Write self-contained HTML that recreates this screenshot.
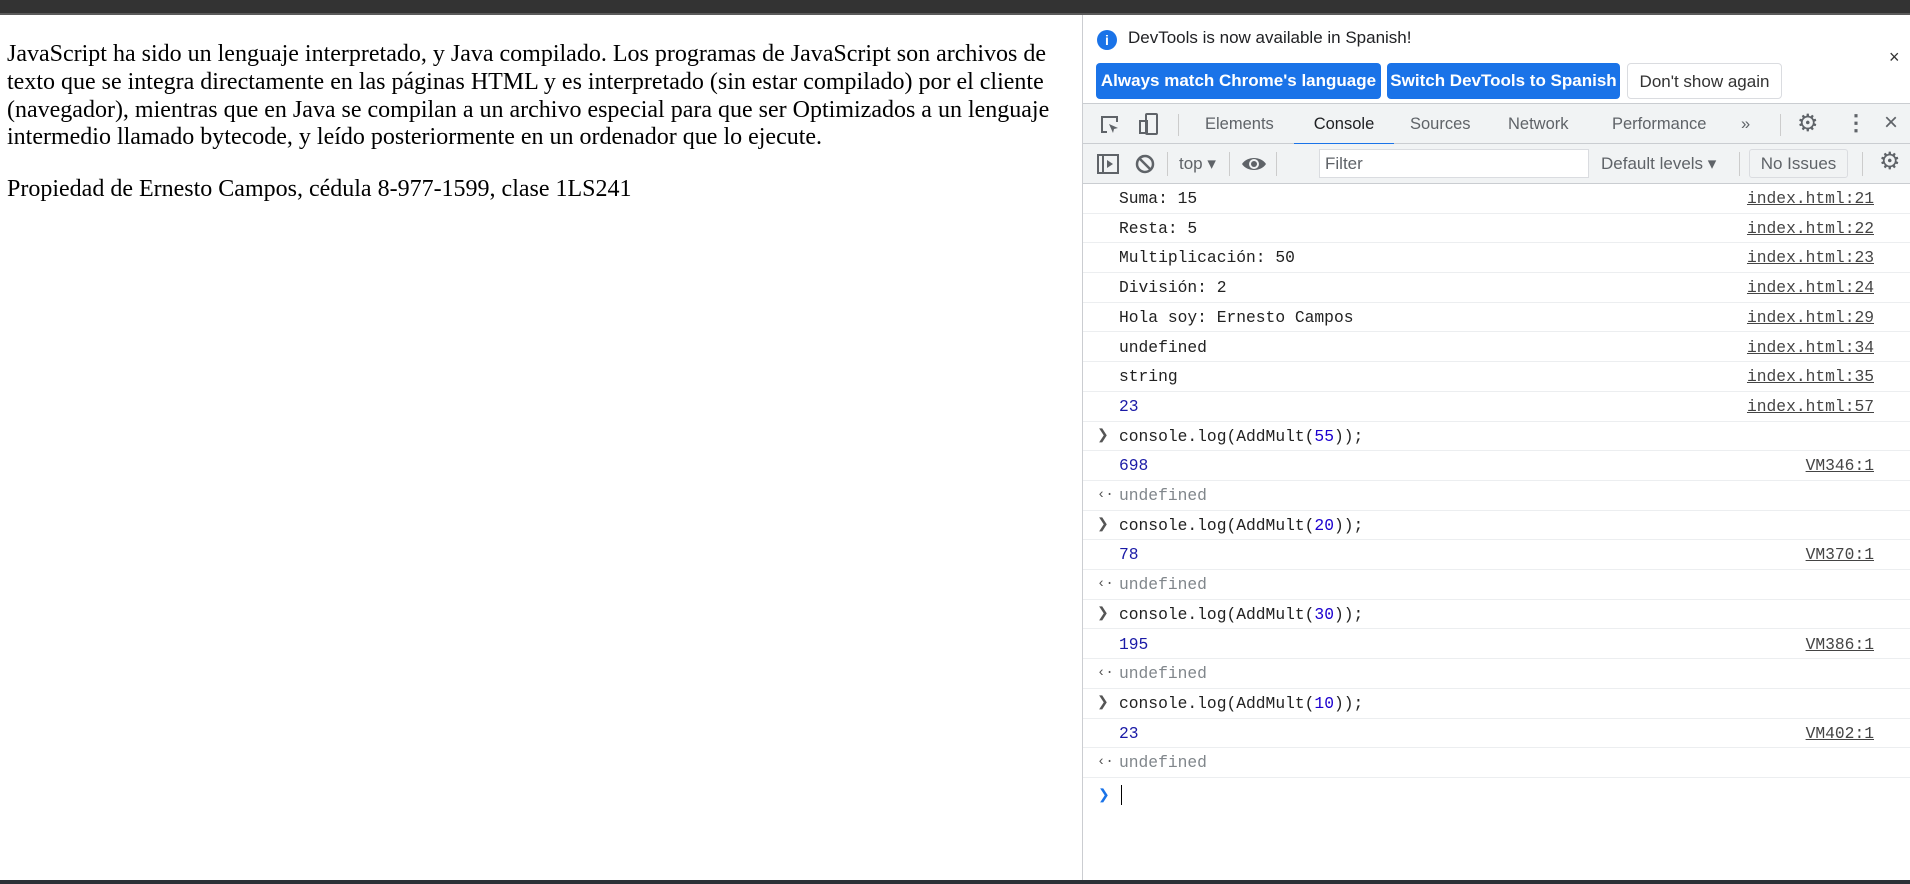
<!DOCTYPE html>
<html><head><meta charset="utf-8"><style>
*{margin:0;padding:0;box-sizing:border-box}
body{width:1910px;height:884px;overflow:hidden;background:#fff;position:relative;font-family:"Liberation Sans",sans-serif}
.a{position:absolute;white-space:nowrap}
#top{left:0;top:0;width:1910px;height:15px;background:#333;border-bottom:2px solid #5a5a5a}
#page{left:7px;top:41px;font-family:"Liberation Serif",serif;font-size:24px;line-height:27.8px;color:#000}
#page p{margin-bottom:24px}
#dt{left:1082px;top:15px;width:828px;height:869px;border-left:1px solid #cbcdd1;background:#fff}
.btn{position:absolute;top:48px;height:36px;border-radius:4px;font-size:17px;line-height:36px;text-align:center;color:#fff;background:#1a73e8;font-weight:bold}
.tb{position:absolute;left:0;width:828px;background:#f1f3f4;border-bottom:1px solid #cacdd1}
.tab{position:absolute;top:0;height:41px;line-height:41px;font-size:16.5px;color:#5f6368}
.row{position:absolute;left:0;width:828px;height:29.7px;border-bottom:1px solid #eceef0;font-family:"Liberation Mono",monospace;font-size:16.3px;line-height:29px;color:#222}
.row .t{position:absolute;left:36px}
.row .l{position:absolute;right:37px;color:#444;text-decoration:underline}
.n{color:#1a1aa6}.g{color:#80868b}.b{color:#1c00cf}
.pr{position:absolute;left:14px;color:#555;font-size:14px}
</style></head><body>
<div id="top" class="a"></div>
<div id="page" class="a">
<p>JavaScript ha sido un lenguaje interpretado, y Java compilado. Los programas de JavaScript son archivos de<br>texto que se integra directamente en las páginas HTML y es interpretado (sin estar compilado) por el cliente<br>(navegador), mientras que en Java se compilan a un archivo especial para que ser Optimizados a un lenguaje<br>intermedio llamado bytecode, y leído posteriormente en un ordenador que lo ejecute.</p>
<p>Propiedad de Ernesto Campos, cédula 8-977-1599, clase 1LS241</p>
</div>
<div id="dt" class="a">
 <div class="a" style="left:14px;top:15px;width:20px;height:20px;border-radius:50%;background:#1a73e8;color:#fff;font-size:14px;font-weight:bold;text-align:center;line-height:20px">i</div>
 <div class="a" style="left:45px;top:13px;font-size:17px;color:#202124">DevTools is now available in Spanish!</div>
 <div class="a" style="left:806px;top:32px;font-size:18px;color:#333">×</div>
 <div class="btn" style="left:13px;width:285px">Always match Chrome's language</div>
 <div class="btn" style="left:304px;width:233px">Switch DevTools to Spanish</div>
 <div class="btn" style="left:544px;width:155px;background:#fff;color:#333;border:1px solid #dadce0;font-weight:normal">Don't show again</div>
 <div class="tb" style="top:88px;height:41px;border-top:1px solid #cacdd1">
  <svg class="a" style="left:16px;top:10px" width="22" height="22" viewBox="0 0 22 22"><path d="M8 18H3V3h15v5" fill="none" stroke="#5f6368" stroke-width="2"/><path d="M10 10l9 4-4 1-1 4z" fill="#5f6368"/></svg>
  <svg class="a" style="left:55px;top:9px" width="22" height="22" viewBox="0 0 22 22"><rect x="8" y="1" width="11" height="20" rx="1" fill="none" stroke="#5f6368" stroke-width="2"/><rect x="2" y="8" width="7" height="12" fill="none" stroke="#5f6368" stroke-width="2"/></svg>
  <div class="a" style="left:95px;top:10px;width:1px;height:22px;background:#ccc"></div>
  <div class="tab" style="left:122px">Elements</div>
  <div class="tab" style="left:211px;width:100px;text-align:center;color:#202124;border-bottom:2px solid #1a73e8">Console</div>
  <div class="tab" style="left:327px">Sources</div>
  <div class="tab" style="left:425px">Network</div>
  <div class="tab" style="left:529px">Performance</div>
  <div class="tab" style="left:658px">»</div>
  <div class="a" style="left:697px;top:10px;width:1px;height:22px;background:#ccc"></div>
  <div class="a" style="left:714px;top:5px;font-size:24px;color:#5f6368">⚙</div>
  <div class="a" style="left:762px;top:6px;font-size:22px;color:#5f6368;font-weight:bold">⋮</div>
  <div class="a" style="left:801px;top:5px;font-size:24px;color:#5f6368">×</div>
 </div>
 <div class="tb" style="top:129px;height:40px">
  <svg class="a" style="left:14px;top:10px" width="22" height="20" viewBox="0 0 22 20"><rect x="1" y="1" width="20" height="18" fill="none" stroke="#5f6368" stroke-width="2"/><path d="M6 1v18" stroke="#5f6368" stroke-width="2"/><path d="M10 6l6 4-6 4z" fill="#5f6368"/></svg>
  <svg class="a" style="left:51px;top:9px" width="22" height="22" viewBox="0 0 22 22"><circle cx="11" cy="11" r="8" fill="none" stroke="#5f6368" stroke-width="2.5"/><path d="M5 5l12 12" stroke="#5f6368" stroke-width="2.5"/></svg>
  <div class="a" style="left:84px;top:8px;width:1px;height:24px;background:#ccc"></div>
  <div class="a" style="left:96px;top:10px;font-size:17px;color:#5f6368">top ▾</div>
  <div class="a" style="left:146px;top:8px;width:1px;height:24px;background:#ccc"></div>
  <svg class="a" style="left:158px;top:10px" width="26" height="20" viewBox="0 0 26 20"><path d="M1 10C6 2 20 2 25 10C20 18 6 18 1 10z" fill="#5f6368"/><circle cx="13" cy="10" r="5" fill="#f1f3f4"/><circle cx="13" cy="10" r="3" fill="#5f6368"/></svg>
  <div class="a" style="left:193px;top:8px;width:1px;height:24px;background:#ccc"></div>
  <div class="a" style="left:236px;top:5px;width:270px;height:29px;background:#fff;border:1px solid #dadce0;font-size:17px;line-height:27px;padding-left:5px;color:#5f6368">Filter</div>
  <div class="a" style="left:518px;top:10px;font-size:17px;color:#5f6368">Default levels ▾</div>
  <div class="a" style="left:656px;top:8px;width:1px;height:24px;background:#ccc"></div>
  <div class="a" style="left:666px;top:5px;width:99px;height:29px;border:1px solid #dadce0;border-radius:3px;font-size:17px;line-height:27px;text-align:center;color:#5f6368">No Issues</div>
  <div class="a" style="left:779px;top:8px;width:1px;height:24px;background:#ccc"></div>
  <div class="a" style="left:796px;top:3px;font-size:24px;color:#5f6368">⚙</div>
 </div>
 <div class="row" style="top:169px"><span class="t">Suma: 15</span><span class="l">index.html:21</span></div>
 <div class="row" style="top:198.7px"><span class="t">Resta: 5</span><span class="l">index.html:22</span></div>
 <div class="row" style="top:228.4px"><span class="t">Multiplicación: 50</span><span class="l">index.html:23</span></div>
 <div class="row" style="top:258.1px"><span class="t">División: 2</span><span class="l">index.html:24</span></div>
 <div class="row" style="top:287.8px"><span class="t">Hola soy:  Ernesto Campos</span><span class="l">index.html:29</span></div>
 <div class="row" style="top:317.5px"><span class="t">undefined</span><span class="l">index.html:34</span></div>
 <div class="row" style="top:347.2px"><span class="t">string</span><span class="l">index.html:35</span></div>
 <div class="row" style="top:376.9px"><span class="t n">23</span><span class="l">index.html:57</span></div>
 <div class="row" style="top:406.6px"><span class="pr">❯</span><span class="t">console.log(AddMult(<span class="b">55</span>));</span></div>
 <div class="row" style="top:436.3px"><span class="t n">698</span><span class="l">VM346:1</span></div>
 <div class="row" style="top:466px"><span class="pr g">‹·</span><span class="t g">undefined</span></div>
 <div class="row" style="top:495.7px"><span class="pr">❯</span><span class="t">console.log(AddMult(<span class="b">20</span>));</span></div>
 <div class="row" style="top:525.4px"><span class="t n">78</span><span class="l">VM370:1</span></div>
 <div class="row" style="top:555.1px"><span class="pr g">‹·</span><span class="t g">undefined</span></div>
 <div class="row" style="top:584.8px"><span class="pr">❯</span><span class="t">console.log(AddMult(<span class="b">30</span>));</span></div>
 <div class="row" style="top:614.5px"><span class="t n">195</span><span class="l">VM386:1</span></div>
 <div class="row" style="top:644.2px"><span class="pr g">‹·</span><span class="t g">undefined</span></div>
 <div class="row" style="top:673.9px"><span class="pr">❯</span><span class="t">console.log(AddMult(<span class="b">10</span>));</span></div>
 <div class="row" style="top:703.6px"><span class="t n">23</span><span class="l">VM402:1</span></div>
 <div class="row" style="top:733.3px"><span class="pr g">‹·</span><span class="t g">undefined</span></div>
 <div class="a" style="left:15px;top:771px;color:#1a73e8;font-size:14px">❯</div>
 <div class="a" style="left:38px;top:770px;width:1px;height:20px;background:#000"></div>
</div>
<div class="a" style="left:0;top:880px;width:1910px;height:4px;background:#2b3036"></div>
</body></html>
